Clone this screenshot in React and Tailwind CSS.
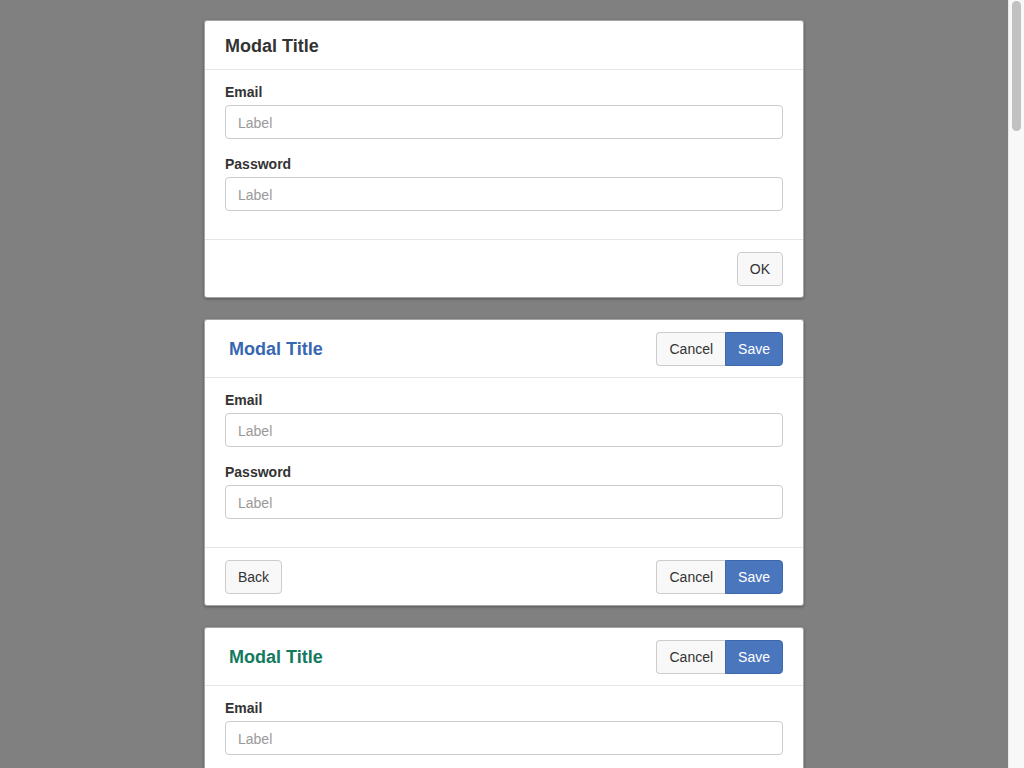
export default function App() {
  const font = { fontFamily: '"Liberation Sans", Arial, sans-serif' };

  const Field = ({ label }) => (
    <div className="mb-[15px] last:mb-0">
      <label className="block text-[14px] leading-[20px] font-bold text-[#333] mb-[3px]">{label}</label>
      <input
        type="text"
        placeholder="Label"
        className="block w-full h-[34px] px-3 pt-[1px] text-[14px] text-[#555] bg-white border border-[#ccc] rounded-[4px] placeholder:text-[#999] outline-none"
      />
    </div>
  );

  const Body = () => (
    <div className="px-5 pt-[12px] pb-[28px] border-b border-[#e5e5e5]">
      <Field label="Email" />
      <Field label="Password" />
    </div>
  );

  const Btn = ({ children, className = "" }) => (
    <button className={"h-[34px] px-3 pt-[1px] text-[14px] text-[#333] bg-[#f8f8f8] border border-[#ccc] " + className}>
      {children}
    </button>
  );

  const CancelSave = () => (
    <div className="flex">
      <Btn className="rounded-l-[4px] border-r-0">Cancel</Btn>
      <button className="h-[34px] px-3 pt-[1px] text-[14px] text-white bg-[#4a76be] border border-[#3d66ab] rounded-r-[4px]">
        Save
      </button>
    </div>
  );

  const Card = ({ children }) => (
    <div className="w-[600px] mx-auto mb-[21px] bg-white border border-[rgba(0,0,0,0.35)] rounded-[3px] shadow-[0_1px_3px_rgba(0,0,0,0.35)]">
      {children}
    </div>
  );

  const Footer = ({ children, className = "" }) => (
    <div className={"h-[57px] px-5 flex items-center " + className}>{children}</div>
  );

  return (
    <div className="h-screen flex bg-[#808080] overflow-hidden" style={font}>
      <div className="flex-1 min-w-0 pt-5 pb-5">
        <Card>
          <div className="h-[49px] px-5 flex items-center border-b border-[#e5e5e5]">
            <h2 className="text-[18px] font-bold text-[#333] translate-y-[1px]">Modal Title</h2>
          </div>
          <Body />
          <Footer className="justify-end">
            <Btn className="rounded-[4px]">OK</Btn>
          </Footer>
        </Card>

        <Card>
          <div className="h-[58px] pl-6 pr-5 flex items-center justify-between border-b border-[#e5e5e5]">
            <h2 className="text-[18px] font-bold text-[#3767b0] translate-y-[1px]">Modal Title</h2>
            <CancelSave />
          </div>
          <Body />
          <Footer className="justify-between">
            <Btn className="rounded-[4px]">Back</Btn>
            <CancelSave />
          </Footer>
        </Card>

        <Card>
          <div className="h-[58px] pl-6 pr-5 flex items-center justify-between border-b border-[#e5e5e5]">
            <h2 className="text-[18px] font-bold text-[#137a60] translate-y-[1px]">Modal Title</h2>
            <CancelSave />
          </div>
          <Body />
          <Footer className="justify-between">
            <Btn className="rounded-[4px]">Back</Btn>
            <CancelSave />
          </Footer>
        </Card>
      </div>

      {/* scrollbar */}
      <div className="w-[16px] shrink-0 bg-[#f8f8f8] border-l border-[#e8e8e8] pt-[1px] flex justify-center">
        <div className="w-[9px] h-[130px] rounded-full bg-[#c1c1c1]" />
      </div>
    </div>
  );
}
